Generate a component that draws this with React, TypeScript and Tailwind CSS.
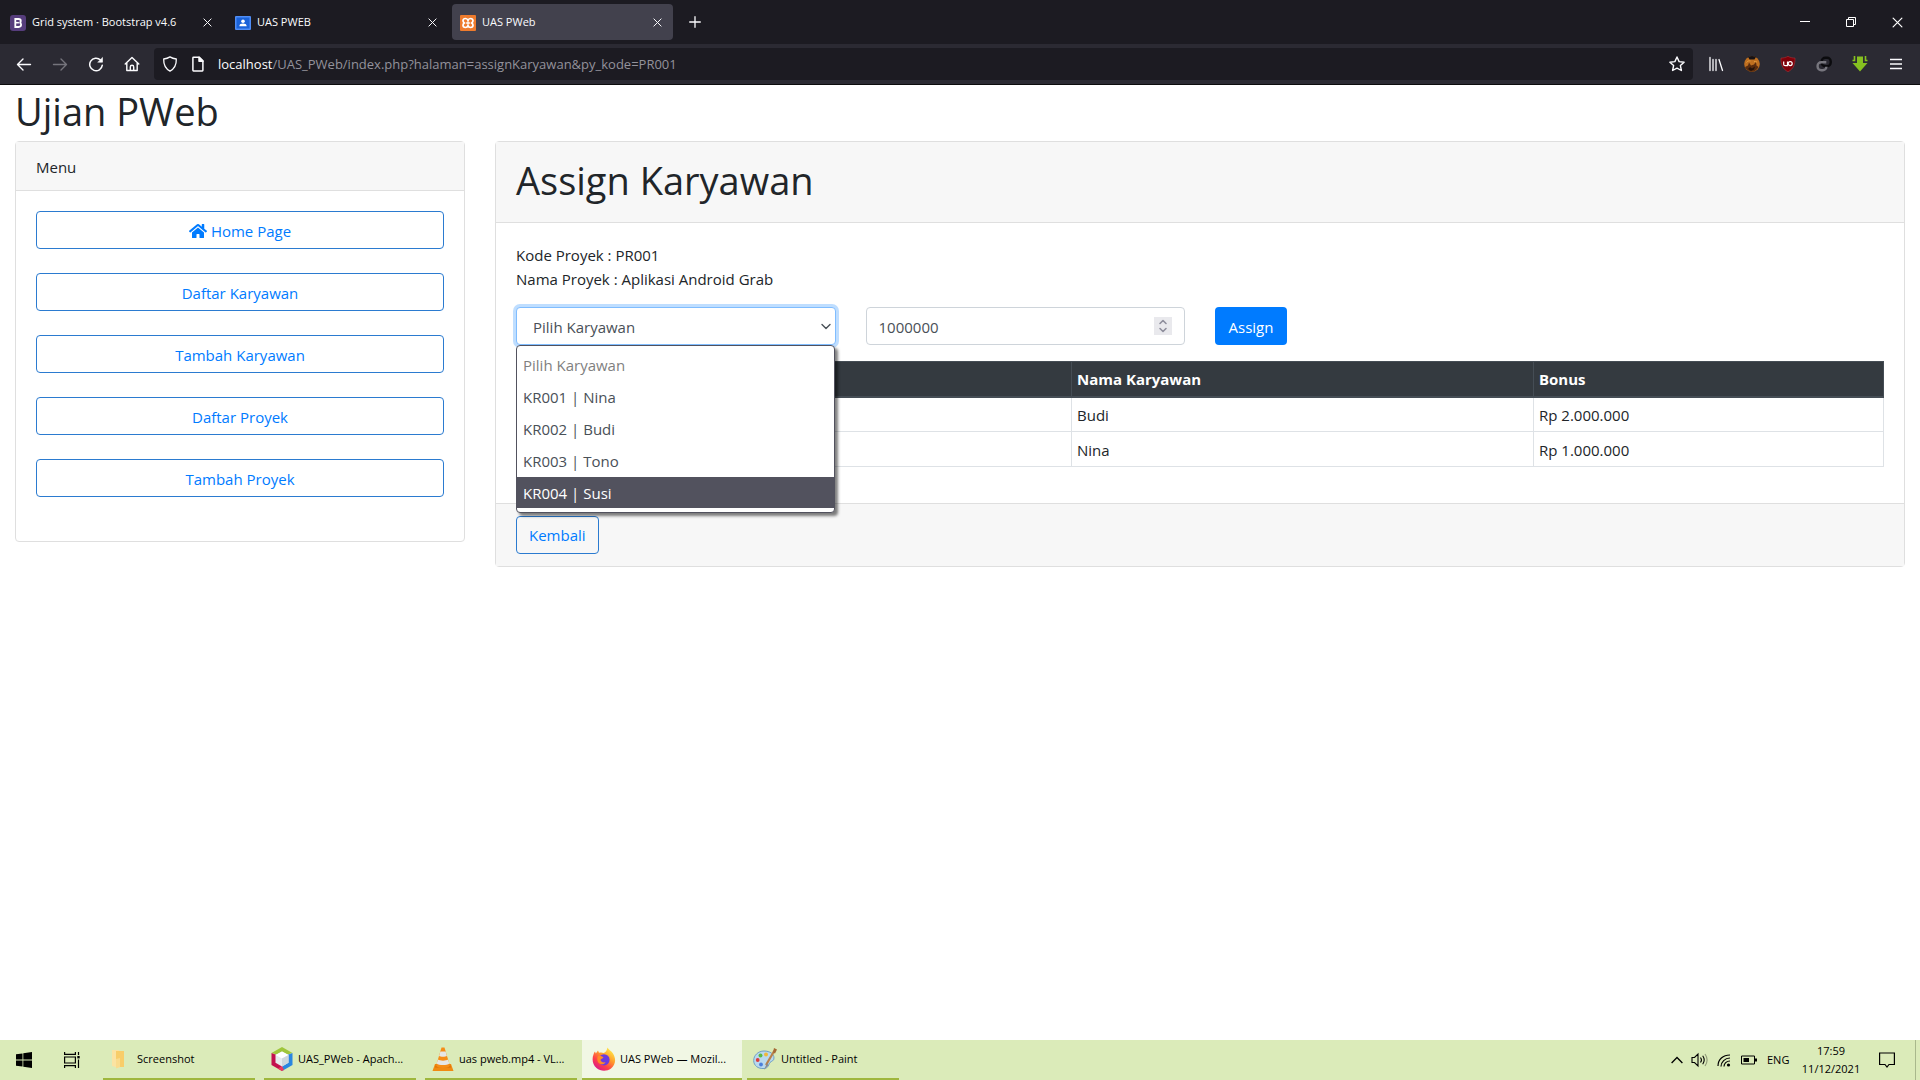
import type { ReactNode } from "react";
import { FaHome } from "react-icons/fa";

const stroke = { fill: "none", stroke: "currentColor", strokeLinecap: "round", strokeLinejoin: "round" } as const;

/* ---------- tab icons ---------- */

function BootstrapIcon() {
  return (
    <svg className="size-4" viewBox="0 0 16 16" aria-hidden="true">
      <rect width="16" height="16" rx="3" fill="#563d7c" />
      <path d="M5.3 4h3.200c1.400 0 2.300.7 2.300 1.900 0 .8-.5 1.500-1.200 1.700.9.2 1.500.9 1.500 2 0 1.500-1 2.400-2.600 2.400H5.300z" fill="none" stroke="#fff" strokeWidth="1.800" />
      <path d="M5.300 7.700h3.600" stroke="#fff" strokeWidth="1.500" />
    </svg>
  );
}

function ClassroomIcon() {
  return (
    <svg className="size-4" viewBox="0 0 16 16" aria-hidden="true">
      <rect y="1" width="16" height="14" rx="1" fill="#4f8df5" />
      <rect x="1.500" y="2.500" width="13" height="11" fill="#1a62d8" />
      <circle cx="8" cy="6.300" r="1.800" fill="#fff" />
      <path d="M4.300 11.300c0-2 1.700-2.700 3.700-2.700s3.700.7 3.700 2.700z" fill="#fff" />
    </svg>
  );
}

function XamppIcon() {
  return (
    <svg className="size-4" viewBox="0 0 16 16" aria-hidden="true">
      <rect width="16" height="16" rx="1" fill="#ee7b2d" />
      <path
        d="M8 5.500C7.600 4.200 6.800 3.500 5.500 3.500 4 3.500 3 4.400 3 5.700 3 6.700 3.500 7.400 4.300 8 3.500 8.600 3 9.300 3 10.300c0 1.300 1 2.200 2.500 2.200 1.300 0 2.100-.7 2.500-2 .4 1.300 1.200 2 2.500 2 1.500 0 2.500-.9 2.500-2.200 0-1-.5-1.700-1.300-2.300.8-.6 1.300-1.300 1.300-2.300 0-1.300-1-2.200-2.500-2.200-1.300 0-2.100.7-2.500 2z"
        fill="none"
        stroke="#fff"
        strokeWidth="1.700"
      />
      <path d="M6.200 8h3.600" stroke="#fff" strokeWidth="1.600" />
    </svg>
  );
}

/* ---------- browser chrome ---------- */

function CloseGlyph({ size }: { size: string }) {
  return (
    <svg className={size} viewBox="0 0 10 10" {...stroke} strokeWidth="1.100" aria-hidden="true">
      <path d="M1 1l8 8M9 1l-8 8" />
    </svg>
  );
}

function Tab({ icon, title, active }: { icon: ReactNode; title: string; active?: boolean }) {
  return (
    <div
      role="tab"
      aria-selected={!!active}
      className={
        "flex h-9 w-[221px] items-center gap-1.5 rounded px-2 pt-px text-[11px] text-[#fbfbfe] " +
        (active ? "bg-[#42414d]" : "")
      }
    >
      {icon}
      <span className="flex-1 truncate">{title}</span>
      <button type="button" aria-label={"Close " + title} className="flex size-4 items-center justify-center">
        <CloseGlyph size="size-[9px]" />
      </button>
    </div>
  );
}

function ChromeButton({ label, children, dim }: { label: string; children: ReactNode; dim?: boolean }) {
  return (
    <button
      type="button"
      aria-label={label}
      className={"flex size-9 items-center justify-center " + (dim ? "text-[#75747c]" : "text-[#fbfbfe]")}
    >
      {children}
    </button>
  );
}

function BrowserChrome() {
  return (
    <header className="border-b border-[#0c0c0d] bg-[#2b2a33]">
      <div className="flex h-11 items-center bg-[#1c1b22]">
        <div role="tablist" className="flex gap-1 pl-0.5">
          <Tab icon={<BootstrapIcon />} title="Grid system · Bootstrap v4.6" />
          <Tab icon={<ClassroomIcon />} title="UAS PWEB" />
          <Tab icon={<XamppIcon />} title="UAS PWeb" active />
        </div>
        <button type="button" aria-label="New tab" className="ml-1 flex size-9 items-center justify-center text-[#fbfbfe]">
          <svg className="size-3" viewBox="0 0 12 12" {...stroke} strokeWidth="1.300"><path d="M6 .7v10.600M.7 6h10.600" /></svg>
        </button>
        <div className="flex-1" />
        <div className="flex h-full text-white">
          <button type="button" aria-label="Minimize" className="flex w-[46px] items-center justify-center">
            <svg className="size-[10px]" viewBox="0 0 10 10"><path d="M0 4.500h10" stroke="currentColor" /></svg>
          </button>
          <button type="button" aria-label="Restore" className="flex w-[46px] items-center justify-center">
            <svg className="size-[10px]" viewBox="0 0 10 10" fill="none" stroke="currentColor"><path d="M.5 2.500h7v7h-7zM2.500 2.500v-2h7v7h-2" /></svg>
          </button>
          <button type="button" aria-label="Close window" className="flex w-[46px] items-center justify-center">
            <CloseGlyph size="size-[11px]" />
          </button>
        </div>
      </div>

      <div className="flex h-10 items-center px-1.5">
        <ChromeButton label="Back">
          <svg className="size-4" viewBox="0 0 16 16" {...stroke} strokeWidth="1.400"><path d="M1.500 8.500h13M7 3L1.500 8.500 7 14" /></svg>
        </ChromeButton>
        <ChromeButton label="Forward" dim>
          <svg className="size-4" viewBox="0 0 16 16" {...stroke} strokeWidth="1.400"><path d="M14.500 8.500h-13M9 3l5.500 5.500L9 14" /></svg>
        </ChromeButton>
        <ChromeButton label="Reload">
          <svg className="size-4" viewBox="0 0 16 16" {...stroke} strokeWidth="1.500"><path d="M14.300 9.200A6.300 6.300 0 1 1 12.500 4" /><path d="M14.500 1.800v4.400h-4.400z" fill="currentColor" strokeWidth=".6" /></svg>
        </ChromeButton>
        <ChromeButton label="Home">
          <svg className="size-4" viewBox="0 0 16 16" {...stroke} strokeWidth="1.400"><path d="M1.200 8L8 1.500 14.800 8M2.800 7v7.500h10.400V7M6.300 14.500V11c0-1 .7-1.700 1.700-1.700s1.700.7 1.700 1.700v3.500" /></svg>
        </ChromeButton>
        <div className="ml-1 flex h-8 flex-1 items-center gap-3 rounded bg-[#1c1b22] px-2 text-[#fbfbfe]">
          <svg className="size-4" viewBox="0 0 16 16" {...stroke} strokeWidth="1.300" aria-hidden="true"><path d="M8 .9c1.900 1.300 4 1.900 6.300 2.100.2 5.700-1.800 9.700-6.300 12.100C3.500 12.700 1.500 8.700 1.700 3 4 2.800 6.100 2.200 8 .9z" /></svg>
          <svg className="size-4" viewBox="0 0 16 16" {...stroke} strokeWidth="1.500" aria-hidden="true"><path d="M3.500 1.200h5.800l3.600 3.600v9.500c0 .4-.3.600-.6.600H3.500c-.4 0-.6-.2-.6-.6V1.800c0-.4.2-.6.6-.6z" /><path d="M9 1.200v4h4z" fill="currentColor" /></svg>
          <p className="flex-1 pt-px text-[13px]">
            localhost<span className="text-[#93929b]">/UAS_PWeb/index.php?halaman=assignKaryawan&amp;py_kode=PR001</span>
          </p>
          <button type="button" aria-label="Bookmark this page">
            <svg className="size-4" viewBox="0 0 16 16" {...stroke} strokeWidth="1.400"><path d="M8 1l2.100 4.600 5 .6-3.700 3.400 1 4.900L8 12.100l-4.400 2.400 1-4.900L.9 6.200l5-.6z" /></svg>
          </button>
        </div>
        <div className="ml-[5px] flex">
          <ChromeButton label="Library">
            <svg className="size-4" viewBox="0 0 16 16" {...stroke} strokeWidth="1.300"><path d="M2 1.500v13M5 3.500v11M8 3.500v11M11 3.500l3.500 11" /></svg>
          </ChromeButton>
          <ChromeButton label="Cat extension">
            <svg className="size-4" viewBox="0 0 16 16">
              <circle cx="8" cy="8" r="7.800" fill="#bf6f20" />
              <path d="M4 .8L8 0l4 .8-1.500 2.700h-5z" fill="#161215" />
              <path d="M1 11l3-1.500 1-3 2 3 3-1 2-3 .5 4 2 1.500c-1.500 3-4 4.800-6.500 4.800S2 14 1 11z" fill="#5a2c0e" />
              <path d="M4 13l2-2 2 1.500 3-2-1 3-3 1.500z" fill="#24120a" />
              <path d="M2.500 6.500C3.500 5 5 4.500 6.500 5M10 5.500l3 .5" stroke="#e59a3c" fill="none" />
            </svg>
          </ChromeButton>
          <ChromeButton label="uBlock Origin">
            <svg className="size-4" viewBox="0 0 16 16">
              <path d="M8 .3c2 1.200 4.500 1.700 7 1.800.3 6-1.500 11-7 13.600C2.500 13.100.7 8.100 1 2.100 3.500 2 6 1.500 8 .3z" fill="#7f0009" stroke="#a83238" strokeWidth=".6" />
              <path d="M3.700 5.500v2.700c0 1 .5 1.500 1.500 1.500h2.300V5.500" fill="none" stroke="#fff" strokeWidth="1.200" />
              <circle cx="10.200" cy="7.600" r="2" fill="none" stroke="#fff" strokeWidth="1.200" />
            </svg>
          </ChromeButton>
          <ChromeButton label="Link extension">
            <svg className="size-4" viewBox="0 0 16 16" fill="none" strokeWidth="2.400">
              <rect x="5.700" y="1.700" width="9" height="8.600" rx="3.600" stroke="#0b0b0e" />
              <path d="M10.300 6.200H5.200a3.600 3.600 0 0 0-3.600 3.600v.9a3.600 3.600 0 0 0 3.600 3.600h1.600a3.600 3.600 0 0 0 3.600-3.600" stroke="#77767e" />
            </svg>
          </ChromeButton>
          <ChromeButton label="Downloads">
            <svg className="size-4" viewBox="0 0 16 16">
              <path d="M5 .5h6V7h4.500L8 15.500.5 7H5z" fill="#86c020" />
              <path d="M2.500 0v4.500h-2M13.500 0v4.500h2" stroke="#86c020" strokeWidth="1.600" fill="none" />
            </svg>
          </ChromeButton>
          <ChromeButton label="Menu">
            <svg className="size-4" viewBox="0 0 16 16" stroke="currentColor" strokeWidth="1.300"><path d="M2 3.500h12M2 8h12M2 12.500h12" /></svg>
          </ChromeButton>
        </div>
      </div>
    </header>
  );
}

/* ---------- page ---------- */

const menuItems = ["Home Page", "Daftar Karyawan", "Tambah Karyawan", "Daftar Proyek", "Tambah Proyek"];
const employees = ["KR001 | Nina", "KR002 | Budi", "KR003 | Tono", "KR004 | Susi"];
const assigned = [
  { name: "Budi", bonus: "Rp 2.000.000" },
  { name: "Nina", bonus: "Rp 1.000.000" },
];

function MenuCard() {
  return (
    <nav aria-label="Menu" className="rounded border border-[#dfdfdf] bg-white">
      <div className="border-b border-[#dfdfdf] bg-[#f7f7f7] px-5 pt-[13px] pb-[11px] leading-6">Menu</div>
      <ul className="flex flex-col gap-6 p-5 pb-11">
        {menuItems.map((item, i) => (
          <li key={item}>
            <a href="#" className="flex h-[38px] items-center justify-center gap-1 rounded border border-[#2b7bd0] pt-0.5 text-[#007bff]">
              {i === 0 && <FaHome className="size-[18px]" aria-hidden="true" />}
              {item}
            </a>
          </li>
        ))}
      </ul>
    </nav>
  );
}

function EmployeeSelect() {
  return (
    <div className="relative">
      <select
        aria-label="Pilih Karyawan"
        defaultValue=""
        className="h-[38px] w-full appearance-none rounded border border-[#80bdff] bg-white px-4 pt-0.5 text-[#495057] ring-3 ring-[#bfdeff] outline-none"
      >
        <option value="">Pilih Karyawan</option>
        {employees.map((e) => (
          <option key={e}>{e}</option>
        ))}
      </select>
      <svg className="pointer-events-none absolute top-4 right-[5px] h-2 w-[10px] text-[#495057]" viewBox="0 0 10 8" {...stroke} strokeWidth="1.400" aria-hidden="true">
        <path d="M1 1.500l4 4 4-4" />
      </svg>
      <ul
        role="listbox"
        aria-label="Karyawan"
        className="absolute top-full right-px left-0 z-10 flex flex-col gap-px rounded border border-[#52525e] bg-white pt-[3px] pb-1 text-[#495057] shadow-[3px_3px_3px_rgba(0,0,0,0.5)]"
      >
        <li role="option" aria-disabled="true" aria-selected="false" className="h-[31px] px-1.5 leading-[33px] text-[#7f7f7f]">
          Pilih Karyawan
        </li>
        {employees.map((e, i) => (
          <li
            key={e}
            role="option"
            aria-selected={i === 3}
            className={"h-[31px] px-1.5 leading-[33px] " + (i === 3 ? "bg-[#52525e] text-white" : "")}
          >
            {e}
          </li>
        ))}
      </ul>
    </div>
  );
}

function BonusInput() {
  return (
    <div className="relative">
      <input
        type="number"
        aria-label="Bonus"
        defaultValue={1000000}
        className="h-[38px] w-full appearance-none rounded border border-[#ced4da] bg-white px-3 pt-0.5 text-[#495057] outline-none [appearance:textfield] [&::-webkit-inner-spin-button]:appearance-none"
      />
      <svg className="absolute top-[10px] right-[13px] size-[18px] bg-[#e9e9ed] text-[#8f8f9d]" viewBox="0 0 18 18" {...stroke} strokeWidth="1.600" aria-hidden="true">
        <path d="M6 6.500l3-3 3 3M6 11.500l3 3 3-3" />
      </svg>
    </div>
  );
}

function AssignCard() {
  return (
    <section className="rounded border border-[#dfdfdf] bg-white">
      <div className="border-b border-[#dfdfdf] bg-[#f7f7f7] px-5 pt-3.5 pb-[18px]">
        <h1 className="text-[38px] leading-[48px]">Assign Karyawan</h1>
      </div>
      <div className="p-5">
        <p className="leading-6">Kode Proyek : PR001</p>
        <p className="leading-6">Nama Proyek : Aplikasi Android Grab</p>
        <form className="-mx-[15px] mt-4 grid grid-cols-4">
          <div className="px-[15px]"><EmployeeSelect /></div>
          <div className="px-[15px]"><BonusInput /></div>
          <div className="px-[15px]">
            <button type="button" className="h-[38px] w-[72px] rounded bg-[#007bff] pt-0.5 text-white">Assign</button>
          </div>
        </form>
        <table className="my-4 w-full table-fixed border-collapse border border-[#dee2e6] leading-6">
          <colgroup>
            <col />
            <col className="w-[462px]" />
            <col className="w-[350px]" />
          </colgroup>
          <thead>
            <tr className="h-[35px] bg-[#343a40] text-left text-white">
              <th scope="col" aria-label="Kode" className="border border-b-2 border-[#454d55]" />
              <th scope="col" className="border border-b-2 border-[#454d55] px-[5px] font-bold">Nama Karyawan</th>
              <th scope="col" className="border border-b-2 border-[#454d55] px-[5px] font-bold">Bonus</th>
            </tr>
          </thead>
          <tbody>
            {assigned.map((row) => (
              <tr key={row.name} className="h-[35px]">
                <td className="border border-[#dee2e6]" />
                <td className="border border-[#dee2e6] px-[5px] pt-px">{row.name}</td>
                <td className="border border-[#dee2e6] px-[5px] pt-px">{row.bonus}</td>
              </tr>
            ))}
          </tbody>
        </table>
      </div>
      <div className="border-t border-[#dfdfdf] bg-[#f7f7f7] px-5 py-3">
        <a href="#" className="flex h-[38px] w-fit items-center rounded border border-[#2b7bd0] px-3 pt-px text-[#007bff]">Kembali</a>
      </div>
    </section>
  );
}

/* ---------- taskbar ---------- */

function FolderIcon() {
  return (
    <svg className="size-6" viewBox="0 0 24 24" aria-hidden="true">
      <path d="M3 3h7v18l-7-2z" fill="#fbe3a2" />
      <path d="M7 4h8v16H7z" fill="#f8cd69" />
      <path d="M7 12l4-1v9l-4 1.500z" fill="#fadb8d" />
    </svg>
  );
}

function NetBeansIcon() {
  return (
    <svg className="size-6" viewBox="0 0 24 24" aria-hidden="true">
      <path d="M12 0l10.500 6L12 9 1.500 6z" fill="#9fc63b" />
      <path d="M1.500 6L12 10v14L1.500 18z" fill="#c3114e" />
      <path d="M22.500 6L12 10v14l10.500-6z" fill="#2a86e0" />
      <path d="M8 21.700l4-3 2 4.200-2 1.100z" fill="#ec3a5f" />
      <path d="M12 4.500l6.500 3.500v7.800L12 19.500l-6.500-3.700V8z" fill="#e6ebee" />
      <path d="M12 4.500L18.500 8 12 11.500 5.500 8z" fill="#fff" />
      <path d="M12 11.500L18.500 8v7.800L12 19.500z" fill="#cdd6dc" />
    </svg>
  );
}

function VlcIcon() {
  return (
    <svg className="size-6" viewBox="0 0 24 24" aria-hidden="true">
      <path d="M4 17h16l2.500 7h-21z" fill="#f08a12" />
      <path d="M5 17.500h14l1 3H4z" fill="#d96d05" />
      <path d="M10.500.5h3L19 19c-2 2.500-12 2.500-14 0z" fill="#f58d17" />
      <path d="M9.400 4.500h5.200l1.300 4.500c-1.500 1-6.300 1-7.800 0zM7 12.500c2 1.500 8 1.500 10 0l1.300 4c-2 2-10.600 2-12.600 0z" fill="#e6e6e6" />
    </svg>
  );
}

function FirefoxIcon() {
  return (
    <svg className="size-6" viewBox="0 0 24 24" aria-hidden="true">
      <defs>
        <linearGradient id="fox" x1=".85" y1=".05" x2=".2" y2=".95">
          <stop offset="0" stopColor="#fff04a" />
          <stop offset=".4" stopColor="#ff9a2b" />
          <stop offset=".7" stopColor="#ff4048" />
          <stop offset="1" stopColor="#d9178c" />
        </linearGradient>
      </defs>
      <path d="M15.500.5c1 2.300 4 3.500 5.500 6 3.500 5.500 2.500 11.500-2 15-4 3-10.500 3-14.500-.5C.5 17.500-.3 12 1.500 7.500c.3-1.200.8-2.300 1.500-3l.8 2L6 3.500l1 2.300c2-.5 3.500-.3 4.500.2 2.500-.5 3.500-3 4-5.500z" fill="url(#fox)" />
      <circle cx="12" cy="12.800" r="5.600" fill="#6b3be0" />
      <path d="M6 9c2-.5 4 .2 5.500 1.500-1 1.200-2.500 1-3 2.500.5 2 3 3 5 2-1 3-5.500 3-7.200.5C5 13.500 5 11 6 9z" fill="#ff8a26" />
    </svg>
  );
}

function PaintIcon() {
  return (
    <svg className="size-6" viewBox="0 0 24 24" aria-hidden="true">
      <path d="M11 4c6 0 10 3 10 7 0 3-2.500 3-4 4.500S16 21 11 21.500C5 22 .7 18.500.7 13.500S5 4 11 4z" fill="#b9d9ee" stroke="#6f9fc4" />
      <circle cx="7.500" cy="8.500" r="2" fill="#5cb946" />
      <circle cx="13" cy="7.500" r="2" fill="#f0b83a" />
      <circle cx="4.700" cy="13" r="1.900" fill="#d93e3e" />
      <circle cx="8" cy="17.500" r="1.900" fill="#4a7fdc" />
      <path d="M21.500 3.500L13 18" stroke="#b98149" strokeWidth="2.200" />
      <path d="M20 5.500l1-4.500 3 1.500-2 4z" fill="#a56a35" />
      <path d="M14 16l-3 7 4.500-5z" fill="#8a8a8a" />
    </svg>
  );
}

const tasks: { title: string; icon: ReactNode; active?: boolean }[] = [
  { title: "Screenshot", icon: <FolderIcon /> },
  { title: "UAS_PWeb - Apach...", icon: <NetBeansIcon /> },
  { title: "uas pweb.mp4 - VL...", icon: <VlcIcon /> },
  { title: "UAS PWeb — Mozil...", icon: <FirefoxIcon />, active: true },
  { title: "Untitled - Paint", icon: <PaintIcon /> },
];

function Taskbar() {
  return (
    <footer className="flex h-10 items-stretch bg-[#dbebb9] text-[11px] text-black">
      <button type="button" aria-label="Start" className="flex w-12 items-center justify-center">
        <svg className="size-4" viewBox="0 0 16 16"><path d="M0 2.300l6.500-.9v6.200H0zM7.300 1.300L16 0v7.600H7.300zM0 8.400h6.500v6.200L0 13.700zM7.300 8.400H16V16l-8.700-1.300z" /></svg>
      </button>
      <button type="button" aria-label="Task view" className="flex w-12 items-center justify-center">
        <svg className="size-4" viewBox="0 0 16 16" fill="none" stroke="currentColor" strokeWidth="1.200"><path d="M.6 0v2.400h10.800V0M.6 5h10.800v6H.6zM.6 16v-2.400h10.800V16M14.500 0v3M14.500 7.500V16" /><path d="M13.300 4h2.400v2.400h-2.400z" fill="currentColor" stroke="none" /></svg>
      </button>
      <div className="ml-[3px] flex flex-1 gap-px">
        {tasks.map((t) => (
          <button
            key={t.title}
            type="button"
            className={"flex w-40 flex-col text-left " + (t.active ? "bg-[#f1f7e4]" : "px-1")}
          >
            <span className={"flex w-full flex-1 items-center gap-1 " + (t.active ? "px-2.5" : "px-1.5")}>
              <span className="shrink-0">{t.icon}</span>
              <span className="pt-px whitespace-nowrap">{t.title}</span>
            </span>
            <span className="h-0.5 w-full bg-[#9fb73d]" />
          </button>
        ))}
      </div>
      <div className="flex items-center">
        <svg className="mr-2 h-3 w-3" viewBox="0 0 12 12" fill="none" stroke="currentColor" strokeWidth="1.300"><path d="M.6 9L6 3.500 11.400 9" /></svg>
        <svg className="mr-2 h-4 w-[18px]" viewBox="0 0 18 16" fill="none" stroke="currentColor" strokeWidth="1.100"><path d="M1 5.500h2.500L7 2v12L3.500 10.500H1zM9.500 5.500c1 1.300 1 3.700 0 5" /><path d="M11.700 3.800c1.800 2.500 1.800 5.900 0 8.400" /><path d="M14 2c2.600 3.700 2.600 8.300 0 12" opacity=".35" /></svg>
        <svg className="mr-2.5 size-[14px]" viewBox="0 0 14 14" fill="none" stroke="currentColor" strokeWidth="1.200"><path d="M1 13C1 6.500 6 2 13 2M4 13.500c0-4.500 4-8.500 9-8.500M7 13.500C7 10.500 9.500 8 13 8" /><circle cx="11.500" cy="12" r="1.600" fill="currentColor" stroke="none" /></svg>
        <svg className="h-[10px] w-4" viewBox="0 0 16 10"><path d="M.5 1h13v8H.5z" fill="none" stroke="currentColor" /><path d="M2.500 3H8v4H2.500zM14 3.500h2v3h-2z" /></svg>
        <span className="ml-2.5 w-7">ENG</span>
        <time dateTime="2021-12-11T17:59" className="ml-0.5 flex w-[68px] flex-col text-center leading-[18px]">
          <span>17:59</span>
          <span>11/12/2021</span>
        </time>
        <button type="button" aria-label="Notifications" className="mr-5 ml-3.5">
          <svg className="size-4" viewBox="0 0 16 16" fill="none" stroke="currentColor" strokeWidth="1.200"><path d="M.6 1h14.800v11.500H10L8 15l-2-2.500H.6z" /></svg>
        </button>
        <span className="mr-1 h-10 w-px bg-[#a9b88c]" />
      </div>
    </footer>
  );
}

export default function App() {
  return (
    <div className="flex min-h-screen flex-col bg-white font-['Open_Sans','Noto_Sans',sans-serif] text-[15px] text-[#212529]">
      <BrowserChrome />
      <main className="flex-1 px-[15px]">
        <h1 className="pt-0.5 pb-1.5 text-[38px] leading-[48px]">Ujian PWeb</h1>
        <div className="-mx-[15px] grid grid-cols-4 items-start">
          <div className="px-[15px]"><MenuCard /></div>
          <div className="col-span-3 px-[15px]"><AssignCard /></div>
        </div>
      </main>
      <Taskbar />
    </div>
  );
}
